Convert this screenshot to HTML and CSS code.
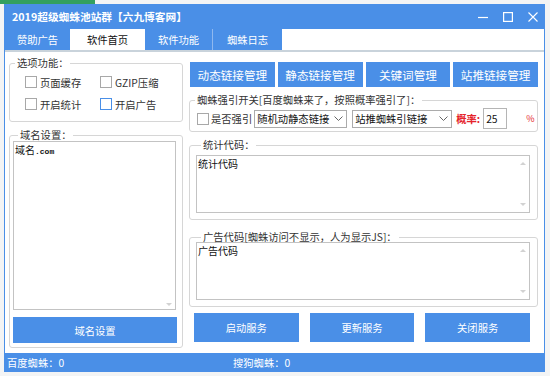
FILE: index.html
```html
<!DOCTYPE html>
<html lang="zh-CN">
<head>
<meta charset="utf-8">
<title>2019超级蜘蛛池站群</title>
<link rel="stylesheet" href="styles.css">
</head>
<body>
<div class="deskbar"></div>
<div class="win">
  <div class="titlebar">
    <span class="title">2019超级蜘蛛池站群【六九博客网】</span>
    <div class="ctrls">
      <svg class="ctl" width="10" height="10" viewBox="0 0 10 10"><path d="M0 5.5H10" stroke="#fff" stroke-width="1.2"/></svg>
      <svg class="ctl" width="10" height="10" viewBox="0 0 10 10"><rect x="0.6" y="0.6" width="8.8" height="8.8" fill="none" stroke="#fff" stroke-width="1.2"/></svg>
      <svg class="ctl" width="10" height="10" viewBox="0 0 10 10"><path d="M0.5 0.5L9.5 9.5M9.5 0.5L0.5 9.5" stroke="#fff" stroke-width="1.1"/></svg>
    </div>
  </div>
  <div class="tabs">
    <div class="tab t1">赞助广告</div>
    <div class="tab t2 active">软件首页</div>
    <div class="tab t3">软件功能</div>
    <div class="tab t4">蜘蛛日志</div>
  </div>
  <div class="content">
    <div class="left">
      <fieldset class="grp opts">
        <legend>选项功能：</legend>
        <div class="cbgrid">
          <div class="cb"><span class="box"></span>页面缓存</div>
          <div class="cb"><span class="box"></span>GZIP压缩</div>
          <div class="cb"><span class="box"></span>开启统计</div>
          <div class="cb"><span class="box focus"></span>开启广告</div>
        </div>
      </fieldset>
      <fieldset class="grp domain">
        <legend>域名设置：</legend>
        <div class="ta">
          <div class="tatext">域名<span class="mono">.com</span></div>
          <div class="sb sb-end"><span class="dn"></span></div>
        </div>
        <div class="btn">域名设置</div>
      </fieldset>
    </div>
    <div class="right">
      <div class="topbtns">
        <div class="btn">动态链接管理</div>
        <div class="btn">静态链接管理</div>
        <div class="btn">关键词管理</div>
        <div class="btn">站推链接管理</div>
      </div>
      <fieldset class="grp qy">
        <legend>蜘蛛强引开关[百度蜘蛛来了，按照概率强引了]：</legend>
        <div class="qyrow">
          <span class="box"></span>
          <span class="qylabel">是否强引</span>
          <div class="sel sel1"><span>随机动静态链接</span><svg width="9" height="5" viewBox="0 0 9 5"><path d="M0.5 0.5L4.5 4.5L8.5 0.5" fill="none" stroke="#666" stroke-width="1"/></svg></div>
          <div class="sel sel2"><span>站推蜘蛛引链接</span><svg width="9" height="5" viewBox="0 0 9 5"><path d="M0.5 0.5L4.5 4.5L8.5 0.5" fill="none" stroke="#666" stroke-width="1"/></svg></div>
          <span class="rate">概率:</span>
          <div class="num">25</div>
          <span class="pct">%</span>
        </div>
      </fieldset>
      <fieldset class="grp tj">
        <legend>统计代码：</legend>
        <div class="ta">
          <div class="tatext">统计代码</div>
          <div class="sb"><span class="up"></span><span class="dn"></span></div>
        </div>
      </fieldset>
      <fieldset class="grp gg">
        <legend>广告代码[蜘蛛访问不显示，人为显示JS]：</legend>
        <div class="ta">
          <div class="tatext">广告代码</div>
          <div class="sb"><span class="up"></span><span class="dn"></span></div>
        </div>
      </fieldset>
      <div class="botbtns">
        <div class="btn">启动服务</div>
        <div class="btn">更新服务</div>
        <div class="btn">关闭服务</div>
      </div>
    </div>
  </div>
  <div class="status">
    <span class="st1">百度蜘蛛：0</span>
    <span>搜狗蜘蛛：0</span>
  </div>
</div>
</body>
</html>
```

FILE: styles.css
```css
* { box-sizing: border-box; }

body {
  margin: 0;
  width: 550px;
  height: 376px;
  overflow: hidden;
  background: #f3f4f5;
  font-family: "Noto Sans CJK SC", "Noto Sans", sans-serif;
  font-size: 10.3px;
  color: #222;
}

.deskbar {
  width: 95px;
  height: 4px;
  background: #33a060;
}

.win {
  margin-left: 4px;
  width: 541px;
  height: 368px;
  border: 1px solid #4a8fe7;
  background: #fff;
  display: flex;
  flex-direction: column;
}

.titlebar {
  height: 24px;
  flex: none;
  background: #4a8fe7;
  color: #fff;
  display: flex;
  align-items: center;
  padding: 0 6px 0 7px;
}

.title {
  flex: 1;
  font-weight: bold;
  font-size: 10.7px;
  line-height: 12px;
}

.ctrls {
  display: flex;
  align-items: center;
  gap: 15px;
}

.ctl { display: block; }

.tabs {
  height: 23px;
  flex: none;
  display: flex;
  border-bottom: 2px solid #c9d3db;
  background: #fff;
}

.tab {
  background: #4a8fe7;
  color: #fff;
  display: flex;
  align-items: center;
  justify-content: center;
  font-size: 10.3px;
}

.t1 { width: 65px; }
.t2 { width: 75px; }
.t3 { width: 68px; border-right: 1px solid #8fb8ef; }
.t4 { width: 69px; }

.tab.active {
  background: #fff;
  color: #111;
}

.content {
  flex: 1;
  display: flex;
  gap: 6px;
  padding: 0 6px 0 4px;
}

.left {
  width: 174px;
  display: flex;
  flex-direction: column;
}

.right {
  flex: 1;
  display: flex;
  flex-direction: column;
}

.grp {
  margin: 0;
  padding: 0;
  min-width: 0;
  border: 1px solid #d6d6d6;
  border-radius: 3px;
}

legend {
  margin-left: 5px;
  padding: 0 2px;
  line-height: 12px;
  font-size: 10.3px;
  color: #333;
}

.opts { margin-top: 5px; }

.cbgrid {
  display: grid;
  grid-template-columns: 75px auto;
  grid-auto-rows: 22px;
  padding: 2px 0 6px 15px;
}

.cb {
  display: flex;
  align-items: center;
  gap: 3px;
  color: #333;
}

.box {
  width: 12px;
  height: 12px;
  flex: none;
  border: 1px solid #a8a8a8;
  background: #fff;
}

.box.focus { border-color: #4a8fe7; }

.domain {
  margin-top: 7px;
  padding: 0 6px 4px 3px;
}

.ta {
  border: 1px solid #c3c3c3;
  display: flex;
  background: #fff;
}

.domain .ta { height: 169px; }

.tatext {
  flex: 1;
  font-size: 10px;
  line-height: 13px;
  padding: 1px 0 0 1px;
  color: #111;
}

.mono {
  font-family: "Liberation Mono", monospace;
  font-size: 8px;
  font-weight: bold;
}

.sb {
  width: 12px;
  display: flex;
  flex-direction: column;
  justify-content: space-between;
  align-items: center;
  padding: 6px 0;
}

.sb-end { justify-content: flex-end; padding-bottom: 3px; }

.up {
  border-left: 3px solid transparent;
  border-right: 3px solid transparent;
  border-bottom: 3px solid #d2d2d2;
}

.dn {
  border-left: 3px solid transparent;
  border-right: 3px solid transparent;
  border-top: 3px solid #d2d2d2;
}

.btn {
  background: #4a8fe7;
  color: #fff;
  display: flex;
  align-items: center;
  justify-content: center;
  font-size: 10.3px;
}

.domain .btn {
  margin-top: 7px;
  height: 26px;
  margin-right: -1px;
}

.topbtns {
  margin-top: 10px;
  margin-left: 1px;
  height: 25px;
  display: grid;
  grid-template-columns: repeat(4, 1fr);
  gap: 3px;
}

.topbtns .btn { font-size: 11.6px; }

.qy { margin-top: 7px; }

.qyrow {
  display: flex;
  align-items: center;
  height: 21px;
  margin: 2px 0 2px 7px;
}

.qylabel {
  margin-left: 2px;
  color: #333;
}

.sel {
  height: 18px;
  border: 1px solid #ababab;
  display: flex;
  align-items: center;
  justify-content: space-between;
  padding: 0 3px 0 2px;
  background: #fff;
  color: #111;
}

.sel svg { display: block; }

.sel1 { width: 93px; margin-left: 2px; }
.sel2 { width: 100px; margin-left: 5px; }

.rate {
  color: #e5232a;
  font-weight: bold;
  margin-left: 4px;
}

.num {
  width: 24px;
  height: 21px;
  border: 1px solid #b5b5b5;
  margin-left: 3px;
  padding-left: 2px;
  display: flex;
  align-items: center;
  color: #111;
}

.pct {
  color: #e5232a;
  margin-left: 19px;
  font-size: 9px;
}

.tj {
  margin-top: 7px;
  padding: 4px 7px 6px 6px;
}

.tj .ta { height: 58px; }

.gg {
  margin-top: 11px;
  padding: 0 7px 6px 6px;
}

.gg .ta { height: 58px; margin-top: -1px; }

.botbtns {
  margin-top: 6px;
  height: 29px;
  display: grid;
  grid-template-columns: repeat(3, 1fr);
  gap: 11px;
  padding: 0 8px 0 5px;
}

.status {
  height: 18px;
  flex: none;
  background: #4a8fe7;
  color: #fff;
  display: flex;
  align-items: center;
  padding-left: 2px;
  font-size: 10.3px;
}

.st1 { width: 226px; }
```
